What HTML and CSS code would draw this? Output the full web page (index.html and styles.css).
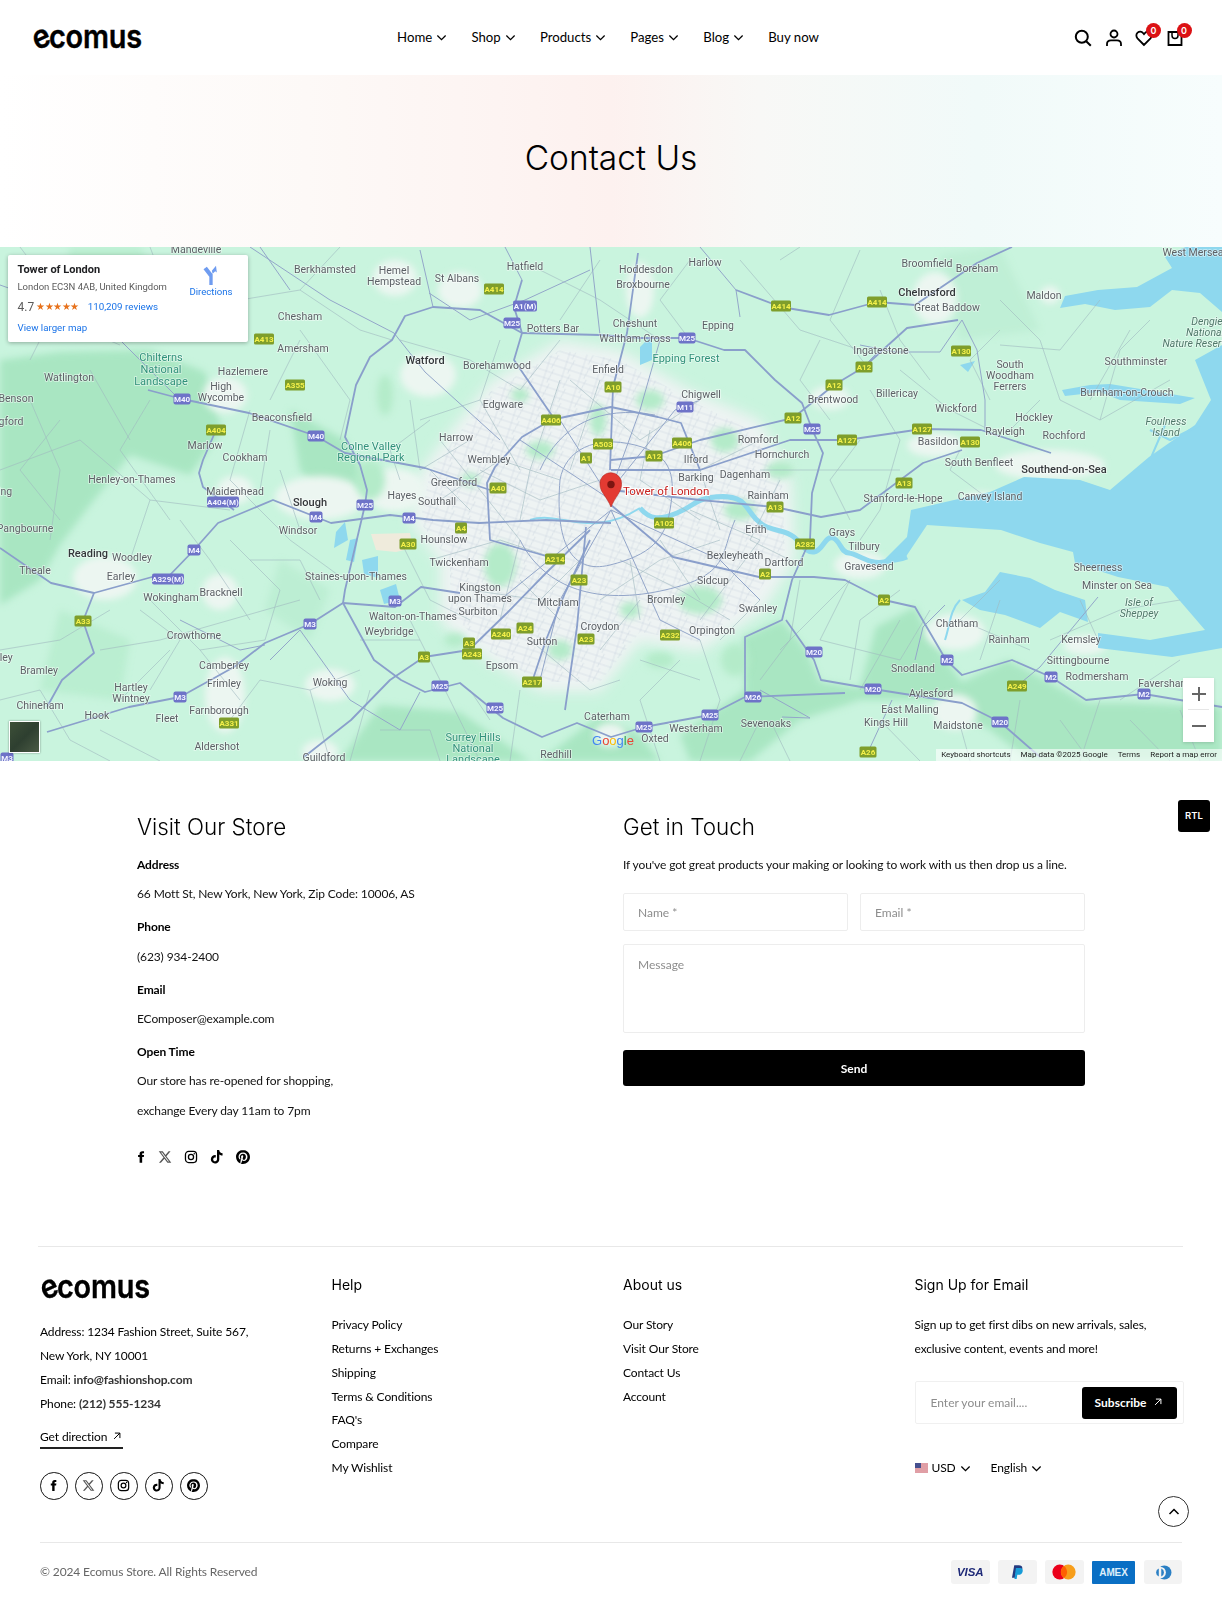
FILE: index.html
```html
<!DOCTYPE html>
<html lang="en">
<head>
<meta charset="utf-8">
<title>Contact Us</title>
<link rel="stylesheet" href="styles.css">
</head>
<body>
<svg class="sprite" aria-hidden="true">
<defs>
<symbol id="i-fb" viewBox="0 0 24 24"><path d="M14 8.5V6.7c0-.9.2-1.3 1.4-1.3H17.2V2h-2.8C11.1 2 9.6 3.9 9.6 6.4v2.1H7v3.6h2.6V22H14v-9.9h2.8l.5-3.6z"/></symbol>
<symbol id="i-x" viewBox="0 0 24 24"><path d="M18.244 2.25h3.308l-7.227 8.26 8.502 11.24H16.17l-5.214-6.817L4.99 21.75H1.68l7.73-8.835L1.254 2.25H8.08l4.713 6.231zm-1.161 17.52h1.833L7.084 4.126H5.117z"/></symbol>
<symbol id="i-ig" viewBox="0 0 24 24"><rect x="2.5" y="2.5" width="19" height="19" rx="5.5" fill="none" stroke="currentColor" stroke-width="2.2"/><circle cx="12" cy="12" r="4.4" fill="none" stroke="currentColor" stroke-width="2.2"/><circle cx="17.6" cy="6.4" r="1.3"/></symbol>
<symbol id="i-tt" viewBox="0 0 25 25"><path d="M12.525.02c1.31-.02 2.61-.01 3.91-.02.08 1.53.63 3.09 1.75 4.17 1.12 1.11 2.7 1.62 4.24 1.79v4.03c-1.44-.05-2.89-.35-4.2-.97-.57-.26-1.1-.59-1.62-.93-.01 2.92.01 5.84-.02 8.75-.08 1.4-.54 2.79-1.35 3.94-1.31 1.92-3.58 3.17-5.91 3.21-1.43.08-2.86-.31-4.08-1.03-2.02-1.19-3.44-3.37-3.65-5.71-.02-.5-.03-1-.01-1.49.18-1.9 1.12-3.72 2.58-4.96 1.66-1.44 3.98-2.13 6.15-1.72.02 1.48-.04 2.96-.04 4.44-.99-.32-2.15-.23-3.02.37-.63.41-1.11 1.04-1.36 1.75-.21.51-.15 1.07-.14 1.61.24 1.64 1.82 3.02 3.5 2.87 1.12-.01 2.19-.66 2.77-1.61.19-.33.4-.67.41-1.06.1-1.79.06-3.57.07-5.36.01-4.03-.01-8.05.02-12.07z"/></symbol>
<symbol id="i-pin" viewBox="0 0 24 24"><path d="M12.017 0C5.396 0 .029 5.367.029 11.987c0 5.079 3.158 9.417 7.618 11.162-.105-.949-.199-2.403.041-3.439.219-.937 1.406-5.957 1.406-5.957s-.359-.72-.359-1.781c0-1.663.967-2.911 2.168-2.911 1.024 0 1.518.769 1.518 1.688 0 1.029-.653 2.567-.992 3.992-.285 1.193.6 2.165 1.775 2.165 2.128 0 3.768-2.245 3.768-5.487 0-2.861-2.063-4.869-5.008-4.869-3.41 0-5.409 2.562-5.409 5.199 0 1.033.394 2.143.889 2.741.099.12.112.225.085.345-.09.375-.293 1.199-.334 1.363-.053.225-.172.271-.401.165-1.495-.69-2.433-2.878-2.433-4.646 0-3.776 2.748-7.252 7.92-7.252 4.158 0 7.392 2.967 7.392 6.923 0 4.135-2.607 7.462-6.233 7.462-1.214 0-2.354-.629-2.758-1.379l-.749 2.848c-.269 1.045-1.004 2.352-1.498 3.146 1.123.345 2.306.535 3.55.535 6.607 0 11.985-5.365 11.985-11.987C23.97 5.39 18.592.026 11.985.026L12.017 0z"/></symbol>
<symbol id="i-chev" viewBox="0 0 12 12"><path d="M1.5 3.8 6 8.3l4.5-4.5" fill="none" stroke="currentColor" stroke-width="1.4"/></symbol>
<symbol id="i-arrow" viewBox="0 0 12 12"><path d="M2.5 9.5 9.5 2.5M3.5 2.5h6v6" fill="none" stroke="currentColor" stroke-width="1.2"/></symbol>
</defs>
</svg>

<header class="site-header">
  <a class="logo" href="#"><span class="logo-e">e</span>comus</a>
  <nav class="main-nav">
    <a href="#">Home <svg class="chev"><use href="#i-chev"/></svg></a>
    <a href="#">Shop <svg class="chev"><use href="#i-chev"/></svg></a>
    <a href="#">Products <svg class="chev"><use href="#i-chev"/></svg></a>
    <a href="#">Pages <svg class="chev"><use href="#i-chev"/></svg></a>
    <a href="#">Blog <svg class="chev"><use href="#i-chev"/></svg></a>
    <a href="#">Buy now</a>
  </nav>
  <div class="header-icons">
    <a href="#" class="hicon"><svg viewBox="0 0 18 18"><circle cx="7.8" cy="7.8" r="6" fill="none" stroke="currentColor" stroke-width="2"/><path d="m12.2 12.2 4.6 4.6" stroke="currentColor" stroke-width="2"/></svg></a>
    <a href="#" class="hicon"><svg viewBox="0 0 18 18"><circle cx="9" cy="5" r="3.5" fill="none" stroke="currentColor" stroke-width="1.8"/><path d="M2 17v-2c0-2.2 1.8-3.6 4-3.6h6c2.2 0 4 1.4 4 3.6v2" fill="none" stroke="currentColor" stroke-width="1.8"/></svg></a>
    <a href="#" class="hicon"><svg viewBox="0 0 18 18"><path d="M9 16 2.5 9.4C.9 7.6 1 5 2.6 3.6 4.3 2.2 6.7 2.5 8 4l1 1.2L10 4c1.3-1.5 3.7-1.8 5.4-.4 1.6 1.4 1.7 4 .1 5.8z" fill="none" stroke="currentColor" stroke-width="1.8"/></svg><span class="badge">0</span></a>
    <a href="#" class="hicon"><svg viewBox="0 0 18 18"><path d="M2.5 3h13v13h-13z" fill="none" stroke="currentColor" stroke-width="1.8"/><path d="M6 4v2.5c0 1.7 1.3 3 3 3s3-1.3 3-3V4" fill="none" stroke="currentColor" stroke-width="1.5"/></svg><span class="badge">0</span></a>
  </div>
</header>

<section class="hero"><h1>Contact Us</h1></section>

<section class="map">
<svg class="map-art" viewBox="0 247 1222 514">
<defs>
<filter id="soft" x="-5%" y="-5%" width="110%" height="110%"><feGaussianBlur stdDeviation="3.5"/></filter>
<filter id="soft2" x="-5%" y="-5%" width="110%" height="110%"><feGaussianBlur stdDeviation="7"/></filter>
<pattern id="streets" width="17" height="15" patternUnits="userSpaceOnUse" patternTransform="rotate(18)"><path d="M0 4h17M0 11h17M5 0v15M12 0l-3 15" stroke="#c3cfdc" stroke-width=".4" fill="none"/></pattern>
<g id="ga2"><rect x="-6" y="-5.5" width="12" height="11" rx="1.5"/></g>
<g id="ga3"><rect x="-8.5" y="-5.5" width="17" height="11" rx="1.5"/></g>
<g id="ga4"><rect x="-10" y="-5.5" width="20" height="11" rx="1.5"/></g>
<g id="gm2"><rect x="-6.5" y="-5.5" width="13" height="11" rx="2"/></g>
<g id="gm3"><rect x="-8.5" y="-5.5" width="17" height="11" rx="2"/></g>
<g id="gl"><rect x="-16" y="-5.5" width="32" height="11" rx="2"/></g>
<g id="gm"><rect x="-12" y="-5.5" width="24" height="11" rx="2"/></g>
</defs>
<rect class="land" x="0" y="247" width="1222" height="514"/>
<g class="hill" filter="url(#soft)">
<path d="M0 360 60 352 150 350 205 372 222 430 190 475 130 455 90 505 60 545 40 580 0 605z"/>
<path d="M290 410 345 440 365 480 335 510 300 470z"/>
<path d="M60 610 130 640 120 700 40 690z" opacity=".45"/>
<path d="M280 560 330 590 310 640 265 610z" opacity=".4"/>
<path d="M743 637 782 620 806 650 820 682 860 688 876 627 915 607 925 628 942 655 962 682 1008 660 1040 677 1086 703 1129 703 1222 707 1222 761 1030 761 990 730 940 700 860 700 800 720 750 761 690 761 680 735 745 690z"/>
<path d="M340 761 380 705 460 712 530 761z"/>
<path d="M540 761 600 715 640 735 660 761z"/>
<path d="M70 247 140 247 180 320 120 340 60 300z" opacity=".45"/>
<path d="M940 255 1000 247 1040 330 960 340z" opacity=".3"/>
</g>
<path class="urban" filter="url(#soft2)" d="M440 445 490 382 560 340 620 350 690 390 760 420 792 480 795 560 762 612 700 652 640 642 600 692 540 692 490 662 440 622 440 562 410 522 420 472z"/>
<g class="town" filter="url(#soft)">
<ellipse cx="105" cy="578" rx="32" ry="22"/><ellipse cx="320" cy="498" rx="45" ry="22"/><ellipse cx="395" cy="490" rx="30" ry="22"/><ellipse cx="428" cy="375" rx="28" ry="22"/><ellipse cx="225" cy="395" rx="22" ry="18"/><ellipse cx="935" cy="298" rx="22" ry="26"/><ellipse cx="1050" cy="465" rx="55" ry="15"/><ellipse cx="955" cy="632" rx="30" ry="18"/><ellipse cx="955" cy="712" rx="22" ry="18"/><ellipse cx="935" cy="445" rx="28" ry="12"/><ellipse cx="460" cy="290" rx="22" ry="18"/><ellipse cx="395" cy="278" rx="22" ry="18"/><ellipse cx="225" cy="695" rx="20" ry="38"/><ellipse cx="330" cy="685" rx="25" ry="16"/><ellipse cx="320" cy="752" rx="18" ry="12"/><ellipse cx="220" cy="592" rx="18" ry="18"/><ellipse cx="830" cy="398" rx="20" ry="12"/><ellipse cx="860" cy="565" rx="26" ry="14"/><ellipse cx="640" cy="290" rx="14" ry="28"/><ellipse cx="1050" cy="295" rx="10" ry="9"/><ellipse cx="1085" cy="645" rx="22" ry="10"/><ellipse cx="610" cy="735" rx="16" ry="12"/><ellipse cx="235" cy="490" rx="18" ry="14"/><ellipse cx="980" cy="500" rx="20" ry="8"/>
</g>
<path class="grid" d="M450 445 490 392 560 350 620 360 690 400 750 430 782 480 785 550 752 602 700 642 640 632 600 682 540 682 490 652 450 612 450 562 420 522 430 472z"/>
<g class="park" filter="url(#soft)">
<ellipse cx="500" cy="565" rx="16" ry="22"/><ellipse cx="540" cy="450" rx="14" ry="9"/><ellipse cx="740" cy="510" rx="16" ry="10"/><ellipse cx="700" cy="600" rx="22" ry="14"/><ellipse cx="650" cy="400" rx="14" ry="10"/><ellipse cx="560" cy="650" rx="12" ry="10"/><ellipse cx="725" cy="440" rx="14" ry="12"/><ellipse cx="470" cy="480" rx="9" ry="7"/><ellipse cx="630" cy="610" rx="10" ry="8"/><ellipse cx="780" cy="470" rx="14" ry="9"/><ellipse cx="455" cy="640" rx="11" ry="7"/><ellipse cx="598" cy="420" rx="8" ry="16"/><ellipse cx="660" cy="660" rx="14" ry="8"/><ellipse cx="735" cy="660" rx="14" ry="16"/><ellipse cx="520" cy="395" rx="9" ry="7"/><ellipse cx="370" cy="480" rx="15" ry="20"/><ellipse cx="385" cy="395" rx="8" ry="20"/>
</g>
<path class="beige" d="M371 534 410 533 413 548 396 552 376 550z"/>
<g class="water">
<path d="M1222 247 1185 247 1165 257 1172 268 1137 287 1098 290 1065 296 1060 308 1085 304 1115 310 1150 307 1172 290 1200 293 1222 312z"/>
<path d="M1222 345 1195 360 1211 400 1195 425 1149 457 1110 490 1080 480 1024 477 990 492 954 500 911 510 907 537 884 560 905 558 927 525 1001 530 1040 543 1073 552 1075 563 1118 577 1168 587 1205 630 1150 640 1098 633 1098 648 1172 657 1222 648z"/>
<path d="M962 600 985 592 1000 572 1030 578 1055 590 1085 600 1088 622 1060 612 1040 628 1005 615 980 610z"/>
<path d="M1062 390 1090 385 1110 384 1195 398 1180 404 1120 400 1100 392 1065 396z"/>
<path d="M336 532 345 522 348 540 334 548zM350 540 358 538 354 562 346 560zM362 560 378 556 378 578 364 574zM380 590 396 584 400 600 384 604z"/>
<path d="M640 347 652 335 652 360 640 365zM960 365 975 361 968 372z"/>
</g>
<g class="river">
<path d="M640 508C650 520 660 520 677 513S695 500 708 498 735 495 743 503 755 522 767 527 785 530 794 537 805 553 814 552 825 535 833 538 840 552 849 553 870 565 884 562 900 560 907 557"/>
<path class="thin" d="M530 520C560 510 590 540 640 508M960 600C950 610 950 625 945 640M1200 425 1170 440 1150 430M1165 425 1150 460"/>
</g>
<g class="minor">
<path d="M30 400 60 470 50 540M0 470 80 440 150 500 130 560M90 370 130 440M150 500 230 510M250 410 230 480 290 540 345 580M150 600 200 650 240 700M200 650 265 640M100 650 160 640 230 620 300 600M120 700 170 650M230 720 260 680 310 690 360 670M310 690 330 761M410 620 450 700 480 761M360 640 420 640M230 540 280 590 265 640M300 530 280 470M410 400 420 470 470 440M400 340 470 360 520 390 560 340M300 290 360 330 392 340M300 340 270 400M240 300 300 290 340 247M120 300 240 300M60 320 120 345M540 270 600 300 660 340M600 260 560 320M740 260 800 330 860 350M860 250 830 320 870 370M1000 300 1040 340 1060 400 1100 420M1100 300 1060 350 1000 345M1130 330 1090 400M900 370 950 410 990 430M870 390 900 440 880 510 860 540M990 500 950 470 960 450M1040 400 1010 430M1100 420 1170 380M850 580 820 640 900 660 930 610M780 650 830 600 850 580M1000 580 960 620 1030 650M1080 600 1098 640M1050 640 1120 610 1180 600M1130 720 1170 761M1060 720 1090 761M1180 660 1120 700M680 660 640 700 660 761M700 640 720 700 700 761M790 761 770 720M880 720 920 761M960 725 970 761M640 600 600 650M490 720 470 690M560 620 520 580M760 440 700 470 650 470M700 470 720 530M570 380 640 440 700 400M480 400 520 470M440 500 500 460 560 480M430 560 500 540 560 560M620 560 680 590 730 620M600 600 660 560 720 540"/>
<path d="M20 247 60 300 30 360M150 247 170 300 230 330M0 650 60 640 110 610M0 700 40 690 70 740 110 761M100 730 160 761M140 610 180 640 150 690M250 560 300 560 320 600M250 620 210 560 180 520M370 690 350 761M380 730 430 730 440 761M520 690 510 761M400 540 430 600 470 620M300 330 350 400 340 440M60 420 20 470 60 520M150 400 120 450 170 520M270 430 260 490M430 420 390 450 400 480M500 340 480 400 420 420M690 260 660 300 690 340M780 260 800 247M820 340 800 380 830 420M880 290 900 340 930 380M1000 330 970 360 990 400M1150 320 1120 350 1100 420M860 440 830 480 850 520M760 470 830 470 900 470M800 580 790 640 760 680M900 590 860 620 850 680M860 690 900 620M980 660 1000 600M1100 700 1080 761M1020 700 1010 761M1180 710 1200 761M760 720 740 761M720 640 760 600M640 660 700 680M530 640 590 690 620 680M470 590 540 600 580 560M480 470 540 500 600 480M470 510 430 470M650 430 640 480 700 520M660 540 700 600M630 560 640 620M780 480 750 540 790 560M560 380 530 470 520 520M600 380 570 470M440 440 520 540 500 620M690 510 760 540 700 620"/>
</g>
<g class="mid">
<path d="M611 510 660 620 700 640M611 510 560 600 540 680M611 510 500 600M611 500 520 440M611 500 560 420M611 490 675 410 700 400M611 510 720 560 760 600M611 490 640 410 660 340"/>
<path d="M560 480C565 450 595 435 635 445S675 480 670 510 650 555 610 565 555 540 560 480zM520 540C545 590 600 605 665 590S720 555 735 520M540 470C560 425 600 405 655 415"/>
<path d="M0 285 100 320 180 400M260 247 290 290M180 620 240 650 265 645M429 293 470 320 525 300 590 270M420 250 433 307M590 247 600 335M505 247 522 280M250 247 330 300 394 333 425 372 500 440M700 247 736 290 740 317"/>
<path d="M860 345 895 352 940 352 962 320 977 350 985 400 985 430M880 350 860 370M270 660 300 630 350 700 400 730 420 692M782 717 810 718 760 690M868 752 892 700M915 660 923 627 945 605M1017 686 1040 667 1098 597"/>
</g>
<g class="major">
<path d="M522 333 480 310 433 307 405 316 392 340 370 357 356 385 345 437 360 465 367 490 365 505 345 590 343 603 374 660 401 680 425 692 460 683 503 718 542 737 577 723 611 737 644 727 710 715 745 697 745 650 745 637 782 620 792 580 810 540 812 493 823 453 812 429 802 403 775 380 745 350 724 350 687 338 640 338 600 335z"/>
<path d="M148 390 182 399 249 413 316 436 345 453 425 468 490 490"/>
<path d="M0 548 51 583 94 593 152 577 168 577 194 550 218 523 273 500 316 517 331 523 390 515 433 520 479 523 546 520 611 523"/>
<path d="M47 732 129 707 180 697 234 667 265 643 310 624 343 603 395 607 421 587 460 593"/>
<path d="M424 657 469 650 507 613 546 573 590 530"/>
<path d="M565 710 577 627 586 527"/>
<path d="M611 505 673 557 759 577 814 577 845 580 884 600 915 607 946 660 962 675 1012 660 1051 677 1086 700 1144 694 1222 707"/>
<path d="M786 620 814 660 821 680 873 689 962 703 1000 722 1040 757"/>
<path d="M745 697 845 693"/>
<path d="M611 470 700 470 790 440 847 440 922 429 981 430 1051 453"/>
<path d="M611 460 654 456 700 440 793 418 834 385 864 367 907 328 958 320"/>
<path d="M736 290 781 307 829 315 877 302 915 305 977 263 1012 247"/>
<path d="M775 507 821 517 860 510 923 463 962 450"/>
<path d="M611 490 700 500 775 507"/>
<path d="M522 280 514 307 522 333 514 360 555 420"/>
<path d="M638 253 627 333 613 387 610 470"/>
<path d="M551 420 522 437 495 467 487 483 490 540 560 560M551 420 611 407 658 417 681 423 700 470"/>
<path d="M94 593 83 621 94 653 62 680 47 707"/>
<path d="M216 430 203 460 199 473 203 487 234 510"/>
<path d="M304 757 351 720 390 680 424 657"/>
<path d="M532 682 546 640 565 593 590 540"/>
</g>
<g class="sa"><use href="#ga4" x="494" y="289"/><use href="#ga4" x="264" y="339"/><use href="#ga4" x="781" y="306"/><use href="#ga4" x="877" y="302"/><use href="#ga4" x="961" y="351"/><use href="#ga4" x="295" y="385"/><use href="#ga4" x="216" y="430"/><use href="#ga4" x="551" y="420"/><use href="#ga4" x="603" y="444"/><use href="#ga2" x="586" y="458"/><use href="#ga3" x="498" y="488"/><use href="#ga2" x="461" y="528"/><use href="#ga3" x="408" y="544"/><use href="#ga4" x="555" y="559"/><use href="#ga3" x="579" y="580"/><use href="#ga3" x="83" y="621"/><use href="#ga3" x="525" y="628"/><use href="#ga4" x="501" y="634"/><use href="#ga3" x="586" y="639"/><use href="#ga2" x="469" y="643"/><use href="#ga2" x="424" y="657"/><use href="#ga4" x="472" y="654"/><use href="#ga4" x="532" y="682"/><use href="#ga4" x="229" y="723"/><use href="#ga3" x="613" y="387"/><use href="#ga3" x="864" y="367"/><use href="#ga3" x="834" y="385"/><use href="#ga3" x="793" y="418"/><use href="#ga4" x="847" y="440"/><use href="#ga4" x="922" y="429"/><use href="#ga4" x="970" y="442"/><use href="#ga4" x="682" y="443"/><use href="#ga3" x="654" y="456"/><use href="#ga3" x="904" y="483"/><use href="#ga3" x="775" y="507"/><use href="#ga4" x="664" y="523"/><use href="#ga4" x="805" y="544"/><use href="#ga2" x="765" y="574"/><use href="#ga2" x="884" y="600"/><use href="#ga4" x="670" y="635"/><use href="#ga4" x="1017" y="686"/><use href="#ga3" x="868" y="752"/></g>
<g class="sm"><use href="#gm" x="525" y="306"/><use href="#gm3" x="512" y="323"/><use href="#gm3" x="687" y="338"/><use href="#gm3" x="182" y="399"/><use href="#gm3" x="316" y="436"/><use href="#gl" x="223" y="502"/><use href="#gm3" x="365" y="505"/><use href="#gm2" x="316" y="517"/><use href="#gm2" x="409" y="518"/><use href="#gm2" x="194" y="550"/><use href="#gl" x="168" y="579"/><use href="#gm2" x="395" y="601"/><use href="#gm2" x="310" y="624"/><use href="#gm3" x="440" y="686"/><use href="#gm2" x="180" y="697"/><use href="#gm3" x="495" y="708"/><use href="#gm2" x="7" y="758"/><use href="#gm3" x="685" y="407"/><use href="#gm3" x="812" y="429"/><use href="#gm3" x="814" y="652"/><use href="#gm2" x="947" y="660"/><use href="#gm2" x="1051" y="677"/><use href="#gm3" x="873" y="689"/><use href="#gm2" x="1144" y="694"/><use href="#gm3" x="753" y="697"/><use href="#gm3" x="710" y="715"/><use href="#gm3" x="644" y="727"/><use href="#gm3" x="1000" y="722"/></g>
<g class="ta"><text x="494" y="289">A414</text><text x="264" y="339">A413</text><text x="781" y="306">A414</text><text x="877" y="302">A414</text><text x="961" y="351">A130</text><text x="295" y="385">A355</text><text x="216" y="430">A404</text><text x="551" y="420">A406</text><text x="603" y="444">A503</text><text x="586" y="458">A1</text><text x="498" y="488">A40</text><text x="461" y="528">A4</text><text x="408" y="544">A30</text><text x="555" y="559">A214</text><text x="579" y="580">A23</text><text x="83" y="621">A33</text><text x="525" y="628">A24</text><text x="501" y="634">A240</text><text x="586" y="639">A23</text><text x="469" y="643">A3</text><text x="424" y="657">A3</text><text x="472" y="654">A243</text><text x="532" y="682">A217</text><text x="229" y="723">A331</text><text x="613" y="387">A10</text><text x="864" y="367">A12</text><text x="834" y="385">A12</text><text x="793" y="418">A12</text><text x="847" y="440">A127</text><text x="922" y="429">A127</text><text x="970" y="442">A130</text><text x="682" y="443">A406</text><text x="654" y="456">A12</text><text x="904" y="483">A13</text><text x="775" y="507">A13</text><text x="664" y="523">A102</text><text x="805" y="544">A282</text><text x="765" y="574">A2</text><text x="884" y="600">A2</text><text x="670" y="635">A232</text><text x="1017" y="686">A249</text><text x="868" y="752">A26</text></g>
<g class="tm"><text x="525" y="306">A1(M)</text><text x="512" y="323">M25</text><text x="687" y="338">M25</text><text x="182" y="399">M40</text><text x="316" y="436">M40</text><text x="223" y="502">A404(M)</text><text x="365" y="505">M25</text><text x="316" y="517">M4</text><text x="409" y="518">M4</text><text x="194" y="550">M4</text><text x="168" y="579">A329(M)</text><text x="395" y="601">M3</text><text x="310" y="624">M3</text><text x="440" y="686">M25</text><text x="180" y="697">M3</text><text x="495" y="708">M25</text><text x="7" y="758">M3</text><text x="685" y="407">M11</text><text x="812" y="429">M25</text><text x="814" y="652">M20</text><text x="947" y="660">M2</text><text x="1051" y="677">M2</text><text x="873" y="689">M20</text><text x="1144" y="694">M2</text><text x="753" y="697">M26</text><text x="710" y="715">M25</text><text x="644" y="727">M25</text><text x="1000" y="722">M20</text></g>
<g class="lab">
<text x="196" y="249">Mandeville</text><text x="325" y="269">Berkhamsted</text><text x="394" y="270">Hemel</text><text x="394" y="281">Hempstead</text><text x="457" y="278">St Albans</text><text x="525" y="266">Hatfield</text><text x="300" y="316">Chesham</text><text x="303" y="348">Amersham</text><text x="553" y="328">Potters Bar</text><text x="646" y="269">Hoddesdon</text><text x="643" y="284">Broxbourne</text><text x="705" y="262">Harlow</text><text x="635" y="323">Cheshunt</text><text x="635" y="338">Waltham Cross</text><text x="718" y="325">Epping</text><text x="927" y="263">Broomfield</text><text x="977" y="268">Boreham</text><text x="947" y="307">Great Baddow</text><text x="1044" y="295">Maldon</text><text x="881" y="350">Ingatestone</text><text x="1193" y="252">West Mersea</text><text x="1136" y="361">Southminster</text><text x="243" y="371">Hazlemere</text><text x="69" y="377">Watlington</text><text x="221" y="386">High</text><text x="221" y="397">Wycombe</text><text x="16" y="398">Benson</text><text x="11" y="421">gford</text><text x="282" y="417">Beaconsfield</text><text x="497" y="365">Borehamwood</text><text x="503" y="404">Edgware</text><text x="205" y="445">Marlow</text><text x="245" y="457">Cookham</text><text x="456" y="437">Harrow</text><text x="489" y="459">Wembley</text><text x="132" y="479">Henley-on-Thames</text><text x="454" y="482">Greenford</text><text x="402" y="495">Hayes</text><text x="437" y="501">Southall</text><text x="235" y="491">Maidenhead</text><text x="5" y="491">ing</text><text x="298" y="530">Windsor</text><text x="25" y="528">Pangbourne</text><text x="444" y="539">Hounslow</text><text x="132" y="557">Woodley</text><text x="459" y="562">Twickenham</text><text x="35" y="570">Theale</text><text x="121" y="576">Earley</text><text x="356" y="576">Staines-upon-Thames</text><text x="480" y="587">Kingston</text><text x="480" y="598">upon Thames</text><text x="171" y="597">Wokingham</text><text x="221" y="592">Bracknell</text><text x="558" y="602">Mitcham</text><text x="478" y="611">Surbiton</text><text x="413" y="616">Walton-on-Thames</text><text x="389" y="631">Weybridge</text><text x="194" y="635">Crowthorne</text><text x="542" y="641">Sutton</text><text x="600" y="626">Croydon</text><text x="5" y="657">lley</text><text x="39" y="670">Bramley</text><text x="502" y="665">Epsom</text><text x="224" y="665">Camberley</text><text x="224" y="683">Frimley</text><text x="330" y="682">Woking</text><text x="131" y="687">Hartley</text><text x="131" y="698">Wintney</text><text x="40" y="705">Chineham</text><text x="219" y="710">Farnborough</text><text x="97" y="715">Hook</text><text x="167" y="718">Fleet</text><text x="217" y="746">Aldershot</text><text x="324" y="757">Guildford</text><text x="556" y="754">Redhill</text><text x="607" y="716">Caterham</text><text x="655" y="738">Oxted</text><text x="608" y="369">Enfield</text><text x="701" y="394">Chigwell</text><text x="833" y="399">Brentwood</text><text x="897" y="393">Billericay</text><text x="1010" y="364">South</text><text x="1010" y="375">Woodham</text><text x="1010" y="386">Ferrers</text><text x="1127" y="392">Burnham-on-Crouch</text><text x="956" y="408">Wickford</text><text x="1034" y="417">Hockley</text><text x="1005" y="431">Rayleigh</text><text x="1064" y="435">Rochford</text><text x="758" y="439">Romford</text><text x="938" y="441">Basildon</text><text x="782" y="454">Hornchurch</text><text x="979" y="462">South Benfleet</text><text x="696" y="459">Ilford</text><text x="696" y="477">Barking</text><text x="745" y="474">Dagenham</text><text x="768" y="495">Rainham</text><text x="903" y="498">Stanford-le-Hope</text><text x="990" y="496">Canvey Island</text><text x="756" y="529">Erith</text><text x="842" y="532">Grays</text><text x="864" y="546">Tilbury</text><text x="735" y="555">Bexleyheath</text><text x="784" y="562">Dartford</text><text x="869" y="566">Gravesend</text><text x="1098" y="567">Sheerness</text><text x="713" y="580">Sidcup</text><text x="1117" y="585">Minster on Sea</text><text x="666" y="599">Bromley</text><text x="758" y="608">Swanley</text><text x="712" y="630">Orpington</text><text x="957" y="623">Chatham</text><text x="1009" y="639">Rainham</text><text x="1081" y="639">Kemsley</text><text x="1078" y="660">Sittingbourne</text><text x="1097" y="676">Rodmersham</text><text x="913" y="668">Snodland</text><text x="1164" y="683">Faversham</text><text x="931" y="693">Aylesford</text><text x="910" y="709">East Malling</text><text x="886" y="722">Kings Hill</text><text x="958" y="725">Maidstone</text><text x="766" y="723">Sevenoaks</text><text x="696" y="728">Westerham</text>
</g>
<g class="lab strong"><text x="425" y="360">Watford</text><text x="927" y="292">Chelmsford</text><text x="310" y="502">Slough</text><text x="88" y="553">Reading</text><text x="1064" y="469">Southend-on-Sea</text></g>
<g class="lab nat"><text x="1207" y="321">Dengie</text><text x="1205" y="332">National</text><text x="1197" y="343">Nature Reserve</text><text x="1166" y="421">Foulness</text><text x="1166" y="432">Island</text><text x="1139" y="602">Isle of</text><text x="1139" y="613">Sheppey</text></g>
<g class="lab park-lab"><text x="161" y="357">Chilterns</text><text x="161" y="369">National</text><text x="161" y="381">Landscape</text><text x="686" y="358">Epping Forest</text><text x="371" y="446">Colne Valley</text><text x="371" y="457">Regional Park</text><text x="473" y="737">Surrey Hills</text><text x="473" y="748">National</text><text x="473" y="759">Landscape</text></g>
<text class="poi" x="623" y="491">Tower of London</text>
<path class="marker" d="M611 507C607 497 600 492 600 484.5A10.8 10.8 0 1 1 621.5 484.5C621.5 492 615 497 611 507z"/>
<circle class="marker-dot" cx="611" cy="484.5" r="3.7"/>
<text class="goog" x="592" y="745"><tspan class="g-b">G</tspan><tspan class="g-r">o</tspan><tspan class="g-y">o</tspan><tspan class="g-b">g</tspan><tspan class="g-g">l</tspan><tspan class="g-r">e</tspan></text>
</svg>

<div class="place-card">
  <div class="place-main">
    <div class="place-name">Tower of London</div>
    <div class="place-addr">London EC3N 4AB, United Kingdom</div>
    <div class="place-rate"><span class="rate-num">4.7</span><span class="stars">★★★★★</span><a href="#">110,209 reviews</a></div>
    <a class="place-link" href="#">View larger map</a>
  </div>
  <div class="place-dir">
    <svg viewBox="0 0 24 24"><path d="M10 24V14L3 5 7 2l7 9v13zM13 7l5-6 1 8-2-1.5-3 3z"/></svg>
    <span>Directions</span>
  </div>
</div>
<div class="sat-thumb"></div>
<div class="zoom-ctl"><span class="z-plus"></span><span class="z-minus"></span></div>
<div class="attrib"><span>Keyboard shortcuts</span><span>Map data ©2025 Google</span><span>Terms</span><span>Report a map error</span></div>
</section>

<section class="contact">
  <div class="store">
    <h2>Visit Our Store</h2>
    <div class="info"><h3>Address</h3><p>66 Mott St, New York, New York, Zip Code: 10006, AS</p></div>
    <div class="info"><h3>Phone</h3><p>(623) 934-2400</p></div>
    <div class="info"><h3>Email</h3><p>EComposer@example.com</p></div>
    <div class="info"><h3>Open Time</h3><p>Our store has re-opened for shopping,</p><p>exchange Every day 11am to 7pm</p></div>
    <div class="plain-social">
      <svg><use href="#i-fb"/></svg><svg class="light"><use href="#i-x"/></svg><svg><use href="#i-ig"/></svg><svg><use href="#i-tt"/></svg><svg><use href="#i-pin"/></svg>
    </div>
  </div>
  <form class="touch">
    <h2>Get in Touch</h2>
    <p class="touch-lead">If you've got great products your making or looking to work with us then drop us a line.</p>
    <div class="two">
      <input type="text" placeholder="Name *">
      <input type="email" placeholder="Email *">
    </div>
    <textarea placeholder="Message"></textarea>
    <button type="button" class="send">Send</button>
  </form>
  <a class="rtl" href="#">RTL</a>
</section>

<footer class="footer">
  <div class="foot-grid">
    <div class="foot-brand">
      <a class="logo" href="#"><span class="logo-e">e</span>comus</a>
      <ul class="addr">
        <li>Address: 1234 Fashion Street, Suite 567,</li>
        <li>New York, NY 10001</li>
        <li>Email: <b>info@fashionshop.com</b></li>
        <li>Phone: <b>(212) 555-1234</b></li>
      </ul>
      <a class="get-dir" href="#">Get direction <svg><use href="#i-arrow"/></svg></a>
      <div class="round-social">
        <a href="#"><svg><use href="#i-fb"/></svg></a>
        <a href="#"><svg class="light"><use href="#i-x"/></svg></a>
        <a href="#"><svg><use href="#i-ig"/></svg></a>
        <a href="#"><svg><use href="#i-tt"/></svg></a>
        <a href="#"><svg><use href="#i-pin"/></svg></a>
      </div>
    </div>
    <div class="foot-col">
      <h4>Help</h4>
      <ul><li>Privacy Policy</li><li>Returns + Exchanges</li><li>Shipping</li><li>Terms &amp; Conditions</li><li>FAQ's</li><li>Compare</li><li>My Wishlist</li></ul>
    </div>
    <div class="foot-col">
      <h4>About us</h4>
      <ul><li>Our Story</li><li>Visit Our Store</li><li>Contact Us</li><li>Account</li></ul>
    </div>
    <div class="foot-col">
      <h4>Sign Up for Email</h4>
      <ul><li>Sign up to get first dibs on new arrivals, sales,</li><li>exclusive content, events and more!</li></ul>
      <div class="subscribe"><input type="email" placeholder="Enter your email...."><button type="button">Subscribe <svg><use href="#i-arrow"/></svg></button></div>
      <div class="locale">
        <span class="loc"><svg class="flag" viewBox="0 0 13 10"><rect width="13" height="10" fill="#e9e9ef"/><path d="M0 1h13M0 3h13M0 5h13M0 7h13M0 9h13" stroke="#d8545c" stroke-width="1"/><rect width="6" height="5" fill="#45508f"/></svg>USD <svg class="chev"><use href="#i-chev"/></svg></span>
        <span class="loc">English <svg class="chev"><use href="#i-chev"/></svg></span>
      </div>
    </div>
  </div>
  <a class="to-top" href="#"><svg viewBox="0 0 12 12"><path d="M1.5 8 6 3.5 10.5 8" fill="none" stroke="currentColor" stroke-width="1.5"/></svg></a>
  <div class="foot-bottom">
    <span class="copy">© 2024 Ecomus Store. All Rights Reserved</span>
    <div class="pay">
      <span class="card visa">VISA</span>
      <span class="card"><svg viewBox="0 0 20 24"><path fill="#253b80" d="M5 1h7c4 0 6 2 5.3 5.5C16.5 10.5 14 12.5 10 12.5H7.5L6.3 20H1.5z"/><path fill="#179bd7" d="M7.5 5h7c3 .5 4 2.5 3.4 5.3-.7 3.5-3 5.2-6.4 5.2H9.7L8.7 22H5.3z"/></svg></span>
      <span class="card"><svg class="mc" viewBox="0 0 34 22"><circle cx="11" cy="11" r="10.5" fill="#eb001b"/><circle cx="23" cy="11" r="10.5" fill="#f79e1b"/><path d="M17 2.5a10.5 10.5 0 0 1 0 17 10.5 10.5 0 0 1 0-17z" fill="#ff5f00"/></svg></span>
      <span class="card amex">AMEX</span>
      <span class="card"><svg class="dc" viewBox="0 0 34 24"><circle cx="20" cy="12" r="11.5" fill="#2a7fc4"/><circle cx="13" cy="12" r="9.5" fill="#f3f3f3"/><path d="M11 5.5a7 7 0 0 0 0 13zM15 5.5a7 7 0 0 1 0 13z" fill="#2a7fc4"/></svg></span>
    </div>
  </div>
</footer>
</body>
</html>
```
FILE: styles.css
```css
* { box-sizing: border-box; }
html, body { margin: 0; padding: 0; }
body { font-family: Lato, "Liberation Sans", sans-serif; font-size: 12px; letter-spacing: -.12px; color: #000; background: #fff; overflow-x: hidden; }
a { color: inherit; text-decoration: none; }
ul { list-style: none; margin: 0; padding: 0; }
h1, h2, h3, h4, p { margin: 0; font-weight: 400; }
.sprite { position: absolute; width: 0; height: 0; }

/* Header */
.site-header { height: 75px; padding: 0 38px 0 32px; display: grid; grid-template-columns: 1fr auto 1fr; align-items: center; }
.logo { font-family: Inter, sans-serif; font-weight: 600; font-size: 33px; line-height: 26px; padding-bottom: 4px; letter-spacing: -.2px; color: #000; display: inline-block; -webkit-text-stroke: .4px #000; transform: scaleX(.875); transform-origin: left center; }
.logo-e { display: inline-block; transform: rotate(-22deg); }
.main-nav { display: flex; gap: 24.2px; font-size: 13.2px; letter-spacing: 0; padding-bottom: 1px; }
.main-nav a { display: flex; align-items: center; gap: 4px; }
.chev { width: 11px; height: 11px; }
.header-icons { display: flex; justify-content: flex-end; gap: 12.6px; }
.hicon { position: relative; width: 18px; height: 18px; display: block; }
.hicon svg { width: 18px; height: 18px; display: block; }
.badge { position: absolute; right: -7.5px; top: -6px; width: 15px; height: 15px; border-radius: 50%; background: #db1215; color: #fff; font-family: Inter, sans-serif; font-size: 9px; font-weight: 600; line-height: 15px; text-align: center; }

/* Hero */
.hero { height: 172px; display: flex; align-items: center; justify-content: center; background: linear-gradient(90deg, #fff 0%, #fdf9f7 25%, #fdf1ef 50%, #f8f8f6 62%, #f1faf9 80%, #f7fdfd 100%); }
.hero h1 { font-family: Inter, sans-serif; font-size: 33.5px; line-height: 40px; font-weight: 300; letter-spacing: 0; padding-bottom: 6px; }

/* Map */
.map { position: relative; height: 514px; overflow: hidden; letter-spacing: 0; }
.map-art { display: block; width: 1222px; height: 514px; font-family: Roboto, sans-serif; }
.land { fill: #c9f4de; }
.hill { fill: #a9e6c2; }
.urban { fill: #eef3f3; }
.grid { fill: url(#streets); }
.town { fill: #ecf6f1; }
.park { fill: #b4ebc9; }
.beige { fill: #efebdc; }
.water { fill: #8ed8ee; }
.river { fill: none; stroke: #8ed8ee; stroke-width: 5; stroke-linejoin: round; }
.river .thin { stroke-width: 2; }
.minor { fill: none; stroke: #9fb9bf; stroke-width: .6; }
.mid { fill: none; stroke: #93a6c9; stroke-width: 1; stroke-linejoin: round; }
.major { fill: none; stroke: #8a9fcb; stroke-width: 1.8; stroke-linejoin: round; }
.sa { fill: #7f9e2b; }
.sm { fill: #6e73c8; }
.ta text, .tm text { font-size: 8px; font-weight: 700; text-anchor: middle; dominant-baseline: central; }
.ta text { fill: #f4f04a; }
.tm text { fill: #f2f3ff; }
.lab text { font-size: 10.5px; fill: #5c6166; text-anchor: middle; dominant-baseline: central; paint-order: stroke; stroke: #fff; stroke-opacity: .55; stroke-width: 1.5px; }
.lab.strong text { font-size: 11px; font-weight: 500; fill: #33373a; }
.lab.nat text { font-style: italic; fill: #50786a; }
.lab.park-lab text { font-size: 11px; fill: #30917a; }
.poi { font-size: 11.5px; fill: #c5221f; dominant-baseline: central; paint-order: stroke; stroke: #fff; stroke-width: 2px; }
.marker { fill: #e33a32; stroke: #b3261e; stroke-width: .6; }
.marker-dot { fill: #7e1511; }
.goog { font-size: 13px; font-family: "Liberation Sans", sans-serif; }
.g-b { fill: #4285f4; } .g-r { fill: #ea4335; } .g-y { fill: #fbbc05; } .g-g { fill: #34a853; }

.place-card { position: absolute; left: 8px; top: 8px; width: 240px; height: 87px; background: #fff; box-shadow: 0 1px 4px rgba(0,0,0,.3); border-radius: 2px; display: flex; font-family: Roboto, sans-serif; padding: 7px 14px 0 9.5px; }
.place-main { flex: 1; }
.place-name { font-size: 11px; font-weight: 700; color: #202124; line-height: 15px; }
.place-addr { font-size: 9.5px; color: #5b5b5b; line-height: 13px; margin-top: 3px; white-space: nowrap; }
.place-rate { display: flex; align-items: center; margin-top: 7px; font-size: 9.8px; line-height: 14px; }
.rate-num { font-size: 12px; color: #5b5b5b; }
.stars { color: #e7711b; font-size: 10px; letter-spacing: -.5px; margin: 0 9px 0 2px; }
.place-rate a, .place-link { color: #1a73e8; }
.place-link { display: block; font-size: 9.7px; line-height: 14px; margin-top: 7px; }
.place-dir { width: 46px; display: flex; flex-direction: column; align-items: center; color: #1a73e8; font-size: 9.6px; padding-top: 3px; }
.place-dir svg { width: 20px; height: 20px; fill: #6f9cf0; margin-bottom: 1px; }
.sat-thumb { position: absolute; left: 9px; top: 474px; width: 31px; height: 32px; border: 1px solid #fff; box-shadow: 0 0 2px rgba(0,0,0,.4); background: linear-gradient(135deg, #3d5038, #2e3f30 50%, #4a5a44); }
.zoom-ctl { position: absolute; left: 1183px; top: 431px; width: 31px; height: 64px; background: #fff; box-shadow: 0 1px 3px rgba(0,0,0,.15); display: grid; grid-template-rows: 1fr 1fr; }
.z-plus, .z-minus { position: relative; }
.z-plus { border-bottom: 1px solid #e6e6e6; margin: 0 5px; }
.z-plus::before, .z-minus::before { content: ""; position: absolute; left: 50%; top: 50%; width: 14px; height: 2px; margin: -1px 0 0 -7px; background: #666; }
.z-plus::after { content: ""; position: absolute; left: 50%; top: 50%; width: 2px; height: 14px; margin: -7px 0 0 -1px; background: #666; }
.attrib { position: absolute; right: 0; bottom: 0; height: 12px; background: rgba(255,255,255,.6); display: flex; gap: 10px; padding: 0 5px; font-family: Roboto, sans-serif; font-size: 8px; line-height: 12px; color: #222; white-space: nowrap; }

/* Contact */
.contact { position: relative; display: grid; grid-template-columns: 486px 462px; padding: 51px 0 80px 137px; }
.contact h2 { font-family: Inter, sans-serif; font-size: 22.4px; line-height: 30px; font-weight: 300; letter-spacing: 0; }
.store h2 { margin-bottom: 8px; }
.info { margin-bottom: 3.5px; }
.info h3 { font-size: 12px; font-weight: 700; line-height: 29.4px; }
.info p, .touch-lead { font-size: 12px; line-height: 29.4px; color: #111; }
.plain-social { display: flex; gap: 12px; margin: 25px 0 0 -3px; height: 16px; }
.plain-social svg { width: 14px; height: 14px; }
.plain-social .light { margin-left: -2px; }
.light { fill: #555; }
.touch-lead { margin-top: 8px; margin-bottom: 13.6px; }
.two { display: grid; grid-template-columns: 1fr 1fr; gap: 12px; margin-bottom: 13px; }
input, textarea { font: inherit; font-size: 12px; border: 1px solid #ededed; background: #fff; padding: 0 14px; outline: 0; border-radius: 2px; color: #000; }
input::placeholder, textarea::placeholder { color: #8d8d8d; opacity: 1; }
.two input { width: 100%; height: 38px; }
textarea { display: block; width: 100%; height: 89px; padding-top: 12px; resize: none; margin-bottom: 17px; }
.send { display: block; width: 100%; height: 36px; background: #000; color: #fff; border: 0; border-radius: 3px; font: 700 12px Lato, sans-serif; }
.rtl { position: absolute; left: 1178px; top: 39px; width: 32px; height: 32px; border-radius: 3px; background: #000; color: #fff; font-family: Inter, sans-serif; font-size: 9.5px; font-weight: 600; line-height: 32px; text-align: center; letter-spacing: 0; }

/* Footer */
.footer { position: relative; padding: 0 40px; }
.foot-grid { margin-left: -2px; margin-right: -1px; padding: 26px 0 0 2px; height: 296px; border-top: 1px solid #e8e8e8; display: grid; grid-template-columns: 291.5px 291.5px 291.5px 269px; }
.foot-brand .logo { display: block; }
.addr { margin-top: 17px; }
.addr li, .foot-col li { font-size: 12px; line-height: 23.8px; }
.addr b { font-weight: 700; color: #333; }
.get-dir { display: inline-block; margin-top: 10.8px; height: 23px; line-height: 22px; padding-right: 1px; border-bottom: 2px solid #222; font-size: 12px; }
.get-dir svg { width: 10px; height: 10px; margin-left: 2px; }
.round-social { display: flex; gap: 7.5px; margin-top: 23px; }
.round-social a { width: 27.5px; height: 27.5px; border: 1px solid #111; border-radius: 50%; display: flex; align-items: center; justify-content: center; }
.round-social svg { width: 13px; height: 13px; }
.foot-col h4 { font-family: Inter, sans-serif; font-size: 14px; line-height: 24px; font-weight: 400; letter-spacing: 0; margin-bottom: 16px; }
.subscribe { margin-top: 20.4px; height: 43px; border: 1px solid #f0f0f0; border-radius: 2px; display: flex; align-items: center; justify-content: space-between; padding-right: 6px; }
.subscribe input { border: 0; background: none; flex: 1; min-width: 0; padding: 0 0 0 15px; }
.subscribe button { width: 95px; height: 32px; flex: none; background: #000; color: #fff; border: 0; border-radius: 3px; font: 700 12px Lato, sans-serif; white-space: nowrap; padding: 0; }
.subscribe button svg { width: 10px; height: 10px; margin-left: 4px; }
.locale { margin-top: 32px; display: flex; gap: 20px; font-size: 12px; line-height: 24px; }
.loc { display: flex; align-items: center; gap: 4px; }
.flag { width: 13px; height: 10px; }
.to-top { position: absolute; left: 1158px; top: 250px; width: 31px; height: 31px; border: 1px solid #333; border-radius: 50%; display: flex; align-items: center; justify-content: center; }
.to-top svg { width: 12px; height: 12px; }
.foot-bottom { display: flex; justify-content: space-between; align-items: flex-start; border-top: 1px solid #e8e8e8; padding-top: 17px; }
.copy { color: #666; font-size: 12px; line-height: 24px; }
.pay { display: flex; gap: 8.5px; align-items: center; }
.card { width: 38.5px; height: 24px; border-radius: 3px; background: #f3f3f3; display: flex; align-items: center; justify-content: center; }
.card svg { width: 13px; height: 17px; }
.card .mc { width: 24px; height: 16px; }
.card .dc { width: 21px; height: 15px; }
.visa { font: italic 800 11.5px "Liberation Sans", sans-serif; color: #1f2a78; }
.amex { width: 43px; height: 23px; border-radius: 1px; background: #0a6fc4; color: #dfeffa; font: 700 10px "Liberation Sans", sans-serif; }
```
